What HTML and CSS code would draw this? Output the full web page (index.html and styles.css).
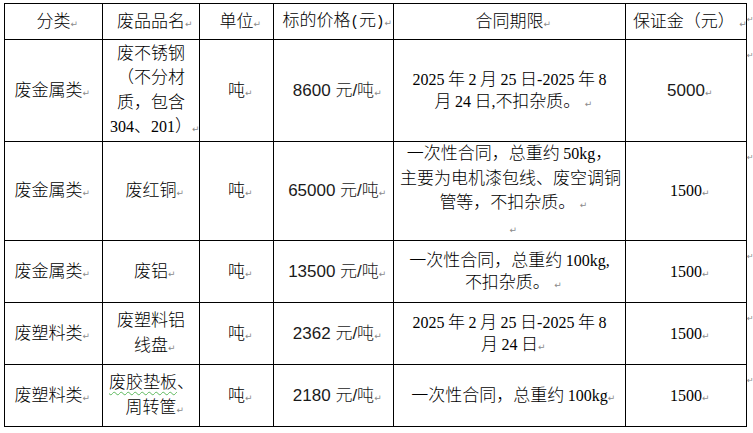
FILE: index.html
```html
<!DOCTYPE html>
<html lang="zh-CN">
<head>
<meta charset="utf-8">
<title>废品处置</title>
<link rel="stylesheet" href="styles.css">
</head>
<body>
<table class="sheet">
  <colgroup>
    <col class="c1"><col class="c2"><col class="c3"><col class="c4"><col class="c5"><col class="c6"><col class="ce">
  </colgroup>
  <tr class="r-head">
    <td>分类<span class="m">↵</span></td>
    <td>废品品名<span class="m">↵</span></td>
    <td>单位<span class="m">↵</span></td>
    <td>标的价格<span class="hw">(</span>元<span class="hw">)</span><span class="m">↵</span></td>
    <td>合同期限<span class="m">↵</span></td>
    <td>保证金（元） <span class="m">↵</span></td>
    <td class="eor"><span class="mk">↵</span></td>
  </tr>
  <tr class="r-1">
    <td class="cat">废金属类<span class="m">↵</span></td>
    <td class="tall">废不锈钢<br>（不分材<br>质，包含<br><span class="lat">304</span>、<span class="lat">201</span>）<span class="m">↵</span></td>
    <td>吨<span class="m">↵</span></td>
    <td class="price">8600 元/吨<span class="m">↵</span></td>
    <td class="tight"><span class="lat">2025 </span>年<span class="lat"> 2 </span>月<span class="lat"> 25 </span>日<span class="lat">-2025 </span>年<span class="lat"> 8</span><br>月<span class="lat"> 24 </span>日<span class="lat">,</span>不扣杂质。 <span class="m">↵</span></td>
    <td class="price">5000<span class="m">↵</span></td>
    <td class="eor"><span class="mk">↵</span></td>
  </tr>
  <tr class="r-2">
    <td class="cat">废金属类<span class="m">↵</span></td>
    <td>废红铜<span class="m">↵</span></td>
    <td>吨<span class="m">↵</span></td>
    <td class="price">65000 元/吨<span class="m">↵</span></td>
    <td class="tall">一次性合同，总重约<span class="lat"> 50kg</span>，<br>主要为电机漆包线<span class="sq">、</span>废空调铜<br>管等，不扣杂质。 <span class="m">↵</span><br><span class="m">↵</span></td>
    <td class="num">1500<span class="m">↵</span></td>
    <td class="eor"><span class="mk">↵</span></td>
  </tr>
  <tr class="r-3">
    <td class="cat">废金属类<span class="m">↵</span></td>
    <td>废铝<span class="m">↵</span></td>
    <td>吨<span class="m">↵</span></td>
    <td class="price">13500 元/吨<span class="m">↵</span></td>
    <td class="tight">一次性合同，总重约<span class="lat"> 100kg,</span><br>不扣杂质。 <span class="m">↵</span></td>
    <td class="num">1500<span class="m">↵</span></td>
    <td class="eor"><span class="mk">↵</span></td>
  </tr>
  <tr class="r-4">
    <td class="cat">废塑料类<span class="m">↵</span></td>
    <td class="tall">废塑料铝<br>线盘<span class="m">↵</span></td>
    <td>吨<span class="m">↵</span></td>
    <td class="price">2362 元/吨<span class="m">↵</span></td>
    <td class="tight"><span class="lat">2025 </span>年<span class="lat"> 2 </span>月<span class="lat"> 25 </span>日<span class="lat">-2025 </span>年<span class="lat"> 8</span><br>月<span class="lat"> 24 </span>日<span class="m">↵</span></td>
    <td class="num">1500<span class="m">↵</span></td>
    <td class="eor"><span class="mk">↵</span></td>
  </tr>
  <tr class="r-5">
    <td class="cat">废塑料类<span class="m">↵</span></td>
    <td class="tall"><span class="gram">废胶垫板</span>、<br>周转筐<span class="m">↵</span></td>
    <td>吨<span class="m">↵</span></td>
    <td class="price">2180 元/吨<span class="m">↵</span></td>
    <td>一次性合同，总重约<span class="lat"> 100kg</span><span class="m">↵</span></td>
    <td class="num">1500<span class="m">↵</span></td>
    <td class="eor"><span class="mk">↵</span></td>
  </tr>
</table>
</body>
</html>
```

FILE: styles.css
```css
html, body {
  margin: 0;
  padding: 0;
  background: #ffffff;
}

body {
  padding: 3px 0 0 4px;
  color: #000000;
  font-family: "Liberation Serif", "Noto Sans CJK SC", serif;
  font-size: 17px;
  font-weight: 300;
  overflow: hidden;
}

.sheet {
  border-collapse: collapse;
  table-layout: fixed;
  width: 749px;
}

.c1 { width: 98px; }
.c2 { width: 97px; }
.c3 { width: 74px; }
.c4 { width: 120px; }
.c5 { width: 232px; }
.c6 { width: 121px; }
.ce { width: 7px; }

.sheet td {
  border: 1px solid #000000;
  padding: 0 6px;
  text-align: center;
  vertical-align: middle;
  line-height: 22px;
  white-space: nowrap;
}

.sheet td.cat {
  padding: 0 16px 0 6px;
}

.sheet td.eor {
  border: none;
  padding: 6px 0 0 0;
  vertical-align: top;
  text-align: left;
  line-height: 14px;
}

.sheet td.tall {
  line-height: 24.5px;
}

.sheet td.tight {
  line-height: 21.5px;
}

.sheet td.price {
  font-family: "Liberation Sans", "Noto Sans CJK SC", sans-serif;
  color: #1a1a1a;
}

.sheet td.num {
  font-size: 16px;
}

.lat {
  font-size: 16px;
  word-spacing: -0.5px;
}

.hw {
  font-family: "Liberation Mono", monospace;
  font-size: 14px;
}

.sq {
  letter-spacing: -8px;
  margin-right: 8px;
}

.r-head { height: 36px; }
.r-1 { height: 102px; }
.r-2 { height: 99px; }
.r-3 { height: 62px; }
.r-4 { height: 62px; }
.r-5 { height: 62px; }

.m {
  display: inline-block;
  width: 0;
  overflow: visible;
  white-space: nowrap;
  color: #8a8a8a;
  font-family: "DejaVu Sans", sans-serif;
  font-size: 9px;
  font-weight: 400;
  line-height: 1;
  vertical-align: baseline;
}

.mk {
  color: #8a8a8a;
  font-family: "DejaVu Sans", sans-serif;
  font-size: 8px;
  font-weight: 400;
}

.gram {
  text-decoration: underline wavy #5cb85c;
  text-decoration-thickness: 1px;
  text-underline-offset: 3px;
}
```
